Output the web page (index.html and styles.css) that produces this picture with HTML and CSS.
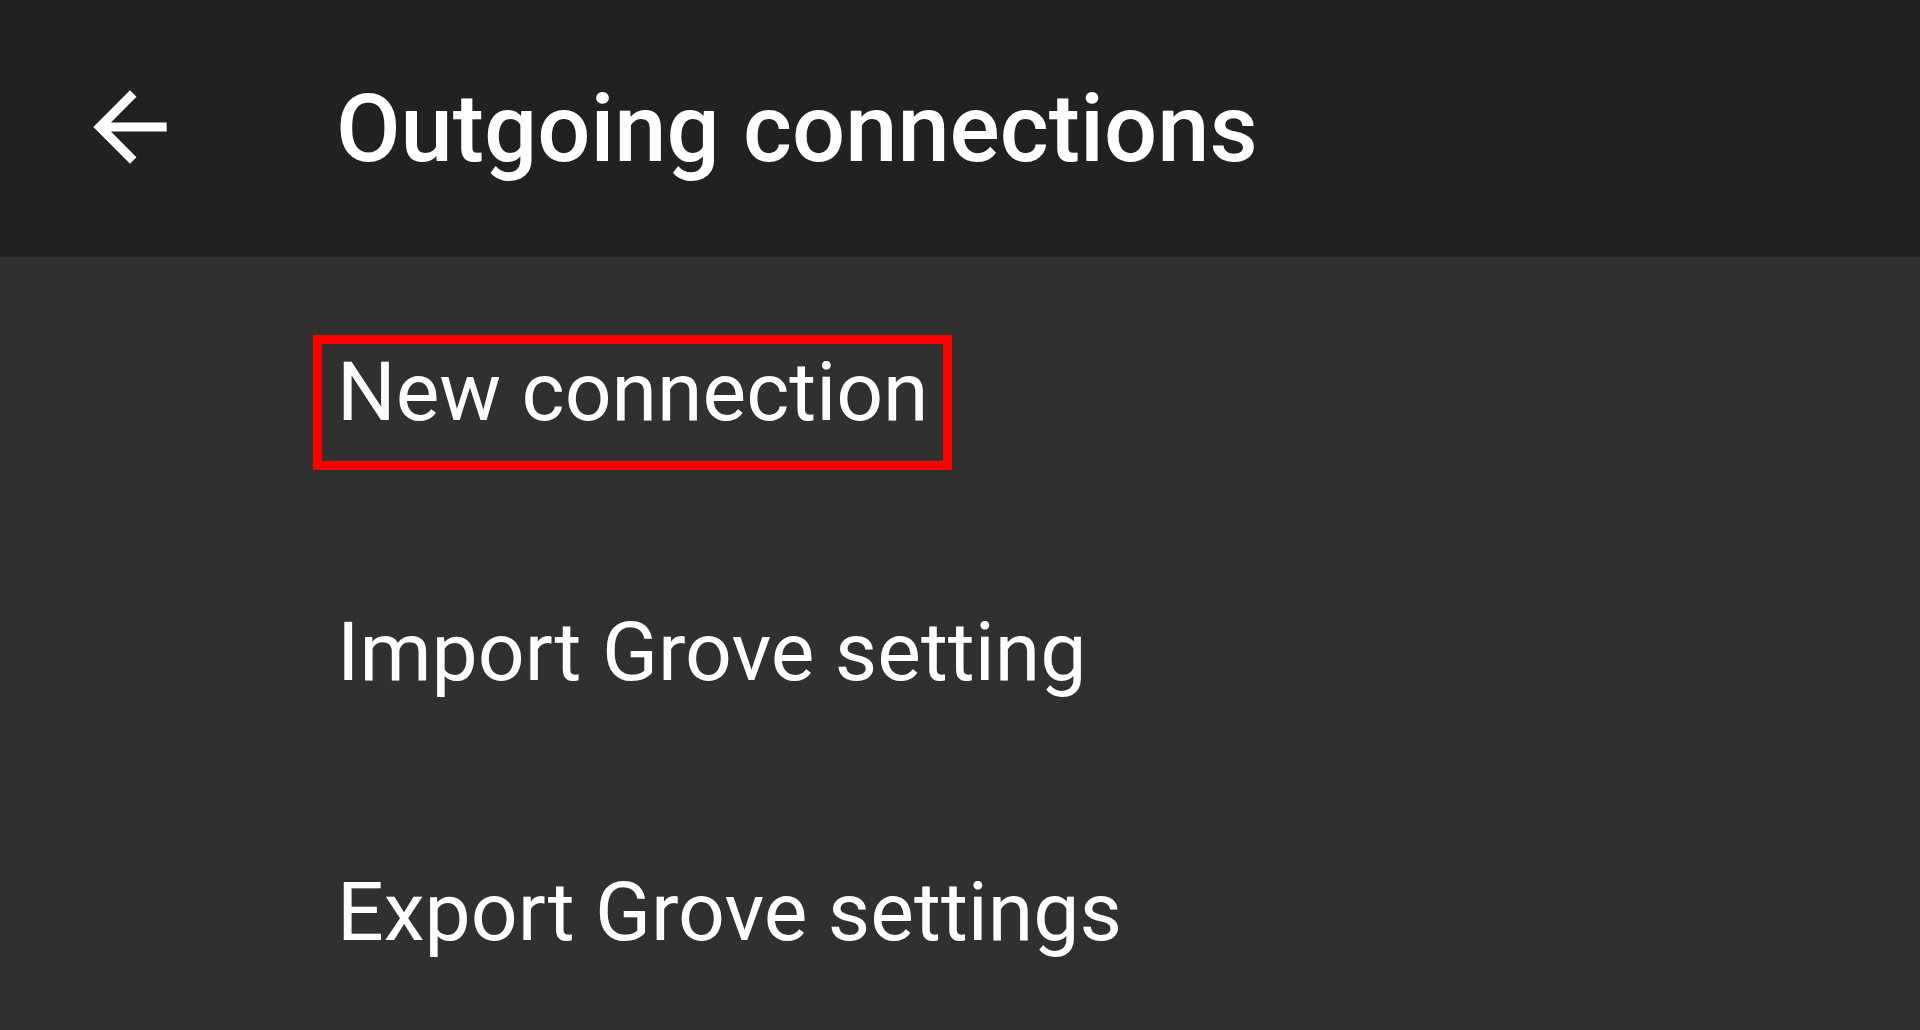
FILE: index.html
```html
<!DOCTYPE html>
<html lang="en">

<head>
    <meta charset="UTF-8">
    <title>Outgoing connections</title>
    <link rel="stylesheet" href="styles.css">
</head>

<body>

    <header class="toolbar">
        <a href="#" class="back" aria-label="Back">
            <svg viewBox="0 0 24 24" width="110" height="110">
                <path fill="#fff" d="M20 11H7.83l5.59-5.59L12 4l-8 8 8 8 1.41-1.41L7.83 13H20v-2z" />
            </svg>
        </a>
        <h1>Outgoing connections</h1>
    </header>

    <ul class="menu">
        <li><span class="marked">New connection</span></li>
        <li><span>Import Grove setting</span></li>
        <li><span>Export Grove settings</span></li>
    </ul>

</body>

</html>
```

FILE: styles.css
```css
body {
    margin: 0;
    background-color: #303030;
    color: #fff;
    font-family: Roboto, "Liberation Sans", sans-serif;
}

.toolbar {
    height: 257px;
    background-color: #212121;
    display: flex;
    align-items: center;
}

.back {
    display: flex;
    margin-left: 75px;
    margin-right: 151px;
    margin-top: -4px;
}

.toolbar h1 {
    margin: 0;
    font-size: 93.8px;
    font-weight: 500;
    line-height: 108px;
}

.menu {
    list-style: none;
    margin: 0;
    padding: 0 0 0 337px;
    padding-top: 5px;
}

.menu li {
    height: 260px;
    display: flex;
    align-items: center;
    font-size: 82.3px;
    line-height: 96px;
}

.marked {
    position: relative;
}

.marked::after {
    content: '';
    position: absolute;
    left: -24px;
    top: -9px;
    right: -23px;
    bottom: -30px;
    border: 9px solid #ff0000;
}
```
